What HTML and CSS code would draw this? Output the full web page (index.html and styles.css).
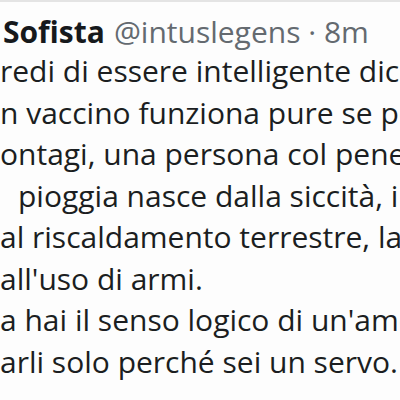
FILE: index.html
```html
<!DOCTYPE html>
<html lang="it">
<head>
<meta charset="utf-8">
<title>Tweet</title>
<link rel="stylesheet" href="styles.css">
</head>
<body>
<article class="tweet">
  <header class="tweet-head">
    <span class="name">Sofista</span>
    <span class="meta">@intuslegens · 8m</span>
  </header>
  <div class="tweet-body">
    <p class="line">redi di essere intelligente dicendo che</p>
    <p class="line">n vaccino funziona pure se poi ti</p>
    <p class="line">ontagi, una persona col pene è</p>
    <p class="line indent">pioggia nasce dalla siccità, il</p>
    <p class="line">al riscaldamento terrestre, la guerra</p>
    <p class="line">all'uso di armi.</p>
    <p class="line">a hai il senso logico di un'ameba</p>
    <p class="line">arli solo perché sei un servo.</p>
  </div>
</article>
</body>
</html>
```

FILE: styles.css
```css
html, body {
  margin: 0;
  padding: 0;
  background: #fdfdfd;
  overflow: hidden;
}
body {
  width: 400px;
  height: 400px;
  border-top: 2px solid #e4e4e4;
  box-sizing: border-box;
}
.tweet {
  font-family: "Open Sans", "Noto Sans", sans-serif;
  color: #1b1e21;
  padding-top: 12px;
}
.tweet-head {
  display: flex;
  gap: 9px;
  white-space: nowrap;
  font-size: 30px;
  line-height: 36px;
  padding-left: 3px;
}
.name {
  font-weight: 700;
  color: #16191c;
}
.meta {
  color: #646a70;
}
.tweet-body {
  font-size: 30px;
  line-height: 41.5px;
}
.line {
  margin: 0;
  white-space: nowrap;
  overflow: hidden;
}
.indent {
  padding-left: 18px;
}
```
